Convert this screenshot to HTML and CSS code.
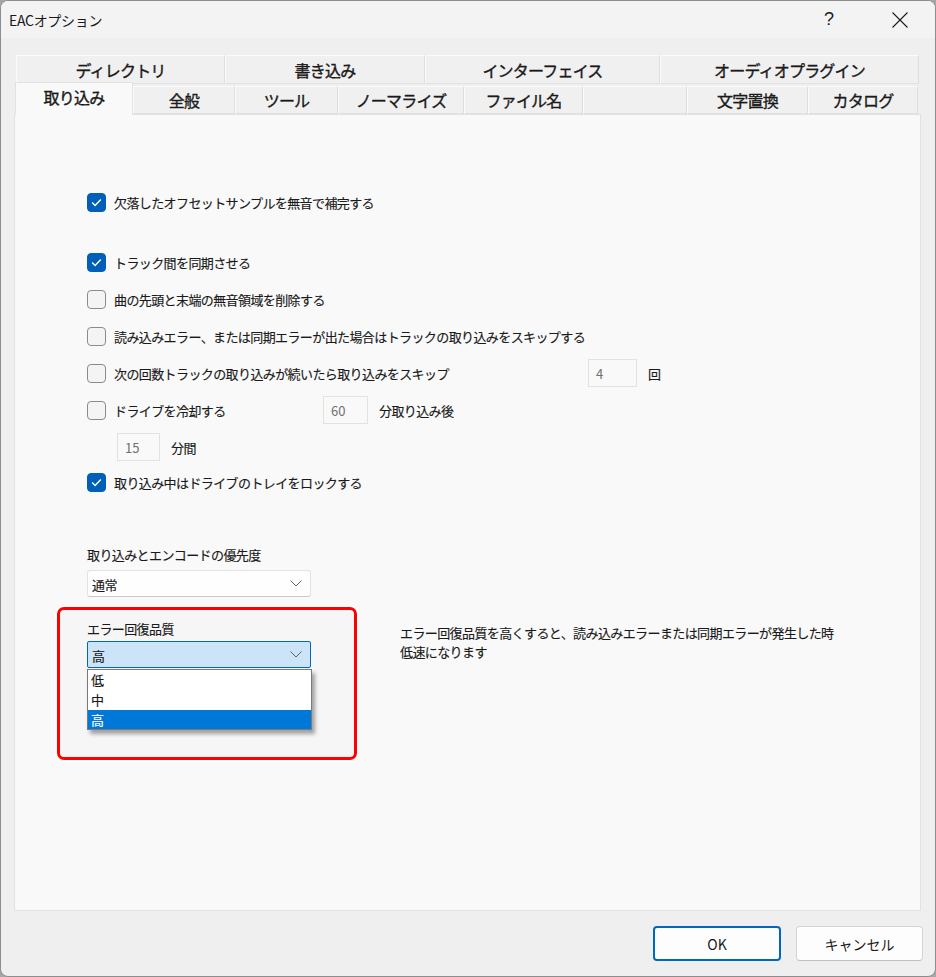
FILE: index.html
```html
<!DOCTYPE html>
<html lang="ja">
<head>
<meta charset="utf-8">
<title>EACオプション</title>
<link rel="stylesheet" href="styles.css">
</head>
<body>
<div class="window">
  <div class="titlebar">
    <span class="title">EACオプション</span>
    <span class="tb-btn help">?</span>
    <span class="tb-btn close">
      <svg width="18" height="18" viewBox="0 0 18 18"><path d="M1.5 1.5 L16.5 16.5 M16.5 1.5 L1.5 16.5" stroke="#1b1b1b" stroke-width="1.1" fill="none"/></svg>
    </span>
  </div>

  <div class="body">
    <div class="tabrow row1">
      <div class="tab t-dir">ディレクトリ</div>
      <div class="tab t-write">書き込み</div>
      <div class="tab t-iface">インターフェイス</div>
      <div class="tab t-plugin">オーディオプラグイン</div>
    </div>
    <div class="tabrow row2">
      <div class="tab selected t-rip">取り込み</div>
      <div class="tab t-gen">全般</div>
      <div class="tab t-tool">ツール</div>
      <div class="tab t-norm">ノーマライズ</div>
      <div class="tab t-file">ファイル名</div>
      <div class="tab t-blank"></div>
      <div class="tab t-char">文字置換</div>
      <div class="tab t-cat">カタログ</div>
    </div>

    <div class="panel">
      <div class="row r-first">
        <span class="cb checked"><svg width="19" height="19" viewBox="0 0 19 19"><path d="M5.2 9.6 L8.1 12.4 L13.8 6.6" stroke="#fff" stroke-width="1.4" fill="none"/></svg></span>
        <span class="lbl">欠落したオフセットサンプルを無音で補完する</span>
      </div>
      <div class="row r-second">
        <span class="cb checked"><svg width="19" height="19" viewBox="0 0 19 19"><path d="M5.2 9.6 L8.1 12.4 L13.8 6.6" stroke="#fff" stroke-width="1.4" fill="none"/></svg></span>
        <span class="lbl">トラック間を同期させる</span>
      </div>
      <div class="row">
        <span class="cb"></span>
        <span class="lbl">曲の先頭と末端の無音領域を削除する</span>
      </div>
      <div class="row">
        <span class="cb"></span>
        <span class="lbl">読み込みエラー、または同期エラーが出た場合はトラックの取り込みをスキップする</span>
      </div>
      <div class="row">
        <span class="cb"></span>
        <span class="lbl lbl-skip">次の回数トラックの取り込みが続いたら取り込みをスキップ</span>
        <span class="num n-4">4</span>
        <span class="unit">回</span>
      </div>
      <div class="row">
        <span class="cb"></span>
        <span class="lbl lbl-cool">ドライブを冷却する</span>
        <span class="num n-60">60</span>
        <span class="unit">分取り込み後</span>
      </div>
      <div class="row r-indent">
        <span class="num n-15">15</span>
        <span class="unit">分間</span>
      </div>
      <div class="row r-lock">
        <span class="cb checked"><svg width="19" height="19" viewBox="0 0 19 19"><path d="M5.2 9.6 L8.1 12.4 L13.8 6.6" stroke="#fff" stroke-width="1.4" fill="none"/></svg></span>
        <span class="lbl">取り込み中はドライブのトレイをロックする</span>
      </div>

      <div class="field-label prio-label">取り込みとエンコードの優先度</div>
      <div class="select">
        <span>通常</span>
        <svg width="12" height="7" viewBox="0 0 12 7"><polyline points="0.5,0.5 6,6 11.5,0.5" stroke="#606060" stroke-width="1" fill="none"/></svg>
      </div>

      <div class="quality">
        <div class="redbox">
          <div class="field-label">エラー回復品質</div>
          <div class="select-wrap">
            <div class="select open">
              <span>高</span>
              <svg width="12" height="7" viewBox="0 0 12 7"><polyline points="0.5,0.5 6,6 11.5,0.5" stroke="#606060" stroke-width="1" fill="none"/></svg>
            </div>
            <ul class="dropdown">
              <li>低</li>
              <li>中</li>
              <li class="hl">高</li>
            </ul>
          </div>
        </div>
        <div class="desc">エラー回復品質を高くすると、読み込みエラーまたは同期エラーが発生した時<br>低速になります</div>
      </div>
    </div>
  </div>

  <div class="footer">
    <button class="btn btn-ok">OK</button>
    <button class="btn">キャンセル</button>
  </div>
</div>
</body>
</html>
```

FILE: styles.css
```css
html, body {
  margin: 0;
  padding: 0;
  background: #a6a6a6;
}
* { box-sizing: border-box; }

.window {
  width: 936px;
  height: 977px;
  border: 1px solid #8d8d8d;
  border-radius: 8px;
  background: #efefef;
  overflow: hidden;
  display: flex;
  flex-direction: column;
  font-family: "Noto Sans CJK JP", "Noto Sans", sans-serif;
  color: #1a1a1a;
}

/* title bar */
.titlebar {
  height: 37px;
  flex: none;
  background: #f3f3f3;
  display: flex;
  align-items: center;
  padding-left: 8px;
  padding-right: 12px;
}
.title {
  font-size: 14px;
  letter-spacing: -0.3px;
}
.tb-btn {
  width: 46px;
  height: 30px;
  display: flex;
  align-items: center;
  justify-content: center;
}
.help {
  margin-left: auto;
  margin-right: 25px;
  font-family: "Liberation Sans", sans-serif;
  font-size: 18px;
  color: #1b1b1b;
}

/* body + tabs */
.body {
  flex: 1;
  display: flex;
  flex-direction: column;
  padding: 17px 14px 0 13px;
}
.tabrow {
  display: flex;
  flex: none;
}
.row1 {
  height: 29px;
  margin-left: 2px;
}
.row2 {
  height: 28px;
  margin-top: 2px;
  margin-left: 1px;
  align-items: flex-end;
}
.tab {
  height: 100%;
  display: flex;
  align-items: center;
  justify-content: center;
  font-size: 16px;
  font-weight: 400;
  -webkit-text-stroke: 0.35px #1a1a1a;
  letter-spacing: -0.8px;
  background: #f0f0f0;
  border-top: 1px solid #fbfbfb;
  border-left: 1px solid #fbfbfb;
  border-right: 1px solid #dedede;
  border-bottom: 1px solid #e2e2e2;
}
.row2 .tab { height: 28px; }
.tab.selected {
  height: 33px;
  margin-bottom: -1px;
  background: #f9f9f9;
  border: 1px solid #e2e2e2;
  border-bottom: none;
  position: relative;
  z-index: 2;
  padding-bottom: 4px;
}
.t-dir { width: 209px; }
.t-write { width: 200px; }
.t-iface { width: 235px; }
.t-plugin { width: 259px; }
.t-rip { width: 118px; }
.t-gen { width: 102px; }
.t-tool { width: 103px; }
.t-norm { width: 126px; }
.t-file { width: 119px; }
.t-blank { width: 104px; }
.t-char { width: 121px; }
.t-cat { width: 110px; }

.panel {
  flex: 1;
  background: #f9f9f9;
  border: 1px solid #e2e2e2;
  padding: 77px 0 0 72px;
  font-size: 13px;
  letter-spacing: -0.6px;
  -webkit-text-stroke: 0.15px #1a1a1a;
}

/* rows */
.row {
  display: flex;
  align-items: center;
  height: 20px;
  margin-top: 17px;
}
.row.r-first { margin-top: 0; }
.row.r-second { margin-top: 40px; }
.row.r-indent { margin-top: 17px; padding-left: 30px; }
.row.r-lock { margin-top: 15px; }

.cb {
  width: 19px;
  height: 19px;
  flex: none;
  border: 1px solid #8b8b8b;
  border-radius: 4px;
  background: #f4f4f4;
  margin-right: 8px;
  display: flex;
}
.cb.checked {
  background: #005fb8;
  border-color: #005fb8;
}
.cb.checked svg { margin: -1px; }
.lbl { white-space: nowrap; }
.lbl-skip { width: 474px; flex: none; }
.lbl-cool { width: 209px; flex: none; }

.num {
  height: 28px;
  flex: none;
  border: 1px solid #e2e2e2;
  background: #f9f9f9;
  color: #707070;
  -webkit-text-stroke: 0;
  display: flex;
  align-items: center;
  padding-left: 7px;
  font-size: 13px;
  letter-spacing: 0;
  margin: -4px 0;
}
.n-4 { width: 49px; }
.n-60 { width: 45px; }
.n-15 { width: 43px; }
.unit { margin-left: 11px; }

.field-label {
  height: 16px;
  line-height: 16px;
}
.prio-label { margin-top: 55px; }

.select {
  width: 224px;
  height: 27px;
  margin-top: 7px;
  background: #fefefe;
  border: 1px solid #e3e3e3;
  border-bottom-color: #c9c9c9;
  border-radius: 3px;
  display: flex;
  align-items: center;
  justify-content: space-between;
  padding: 0 8px 0 4px;
}
.select span { padding-top: 1px; }

/* error quality block */
.quality {
  display: flex;
  align-items: flex-start;
  margin-top: 10px;
  margin-left: -30px;
}
.redbox {
  width: 300px;
  height: 153px;
  flex: none;
  border: 3px solid #ff0000;
  border-radius: 7px;
  background: #f6f6f6;
  box-shadow: 0 0 0 2px #ffffff;
  padding: 11px 0 0 27px;
}
.select-wrap {
  position: relative;
  width: 224px;
  margin-top: 4px;
}
.select.open {
  margin-top: 0;
  background: #cce4f7;
  border: 1px solid #0067c0;
  border-radius: 2px;
}
.dropdown {
  position: absolute;
  left: 0;
  top: 28px;
  width: 225px;
  margin: 0;
  padding: 0;
  list-style: none;
  background: #ffffff;
  border: 1px solid #7a7a7a;
  box-shadow: 3px 4px 4px rgba(0, 0, 0, 0.35);
  z-index: 5;
}
.dropdown li {
  height: 20px;
  line-height: 20px;
  padding-left: 3px;
}
.dropdown li.hl {
  background: #0078d7;
  color: #ffffff;
  -webkit-text-stroke: 0.15px #ffffff;
  height: 19px;
}
.desc {
  margin-left: 43px;
  margin-top: 16px;
  line-height: 19px;
  white-space: nowrap;
}

/* footer */
.footer {
  height: 65px;
  flex: none;
  display: flex;
  justify-content: flex-end;
  align-items: flex-start;
  gap: 15px;
  padding: 15px 12px 0 0;
}
.btn {
  width: 127px;
  height: 35px;
  background: #fdfdfd;
  border: 1px solid #d3d3d3;
  border-bottom-color: #c0c0c0;
  border-radius: 4px;
  font-family: "Noto Sans CJK JP", "Noto Sans", sans-serif;
  font-size: 14px;
  color: #1a1a1a;
  padding: 0;
}
.btn-ok {
  width: 128px;
  border: 2px solid #0067c0;
}
```
